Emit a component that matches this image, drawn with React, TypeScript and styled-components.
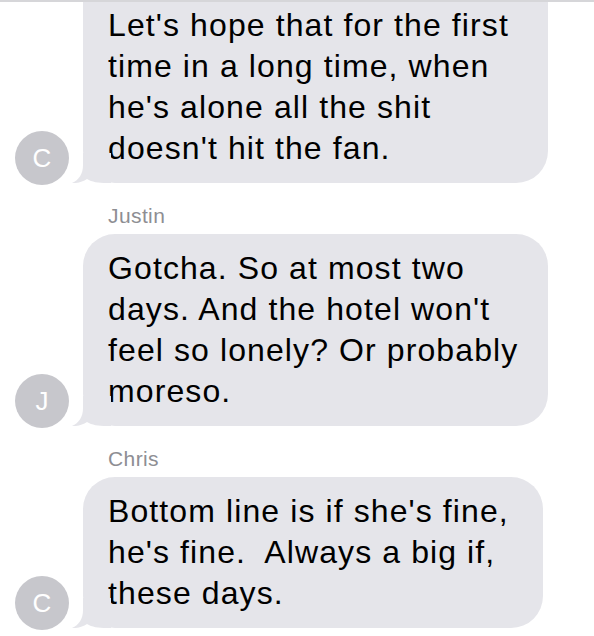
import styled, { createGlobalStyle } from "styled-components";

const GlobalStyle = createGlobalStyle`
    html, body {
        margin: 0;
        padding: 0;
        background: #ffffff;
    }
    body {
        font-family: "Liberation Sans", Arial, sans-serif;
    }
`;

const Screen = styled.div`
    width: 594px;
    height: 636px;
    overflow: hidden;
    background: #ffffff;
    border-top: 2px solid #d6d6d9;
    box-sizing: border-box;
`;

const Thread = styled.div`
    display: flex;
    flex-direction: column;
    margin-top: -52px;
`;

const Group = styled.div`
    display: flex;
    flex-direction: column;
`;

const Sender = styled.div`
    margin: 21px 0 6px 108px;
    font-size: 21px;
    line-height: 24px;
    letter-spacing: 0.4px;
    color: #8e8e93;
`;

const Row = styled.div`
    display: flex;
    align-items: flex-end;
    gap: 14px;
    padding-left: 15px;
`;

const Avatar = styled.div`
    width: 54px;
    height: 54px;
    flex-shrink: 0;
    margin-bottom: -2px;
    border-radius: 50%;
    background: #c7c7cc;
    color: #ffffff;
    font-size: 26px;
    display: flex;
    align-items: center;
    justify-content: center;
`;

const Bubble = styled.div<{ $width: number }>`
    position: relative;
    width: ${(props) => props.$width}px;
    box-sizing: border-box;
    padding: 14px 25px;
    background: #e5e5ea;
    border-radius: 32px;
    color: #000000;
    font-size: 32px;
    line-height: 41px;
    letter-spacing: 1.1px;
`;

const Line = styled.div`
    white-space: pre;
`;

const Tail = styled.svg`
    position: absolute;
    left: -12px;
    bottom: 0;
    width: 40px;
    height: 30px;
`;

interface IMessage {
    id: number;
    sender?: string;
    initial: string;
    width: number;
    lines: string[];
}

const messages: IMessage[] = [
    {
        id: 1,
        initial: "C",
        width: 465,
        lines: [
            "Only you know, I suppose.",
            "Let's hope that for the first",
            "time in a long time, when",
            "he's alone all the shit",
            "doesn't hit the fan.",
        ],
    },
    {
        id: 2,
        sender: "Justin",
        initial: "J",
        width: 465,
        lines: ["Gotcha. So at most two", "days. And the hotel won't", "feel so lonely? Or probably", "moreso."],
    },
    {
        id: 3,
        sender: "Chris",
        initial: "C",
        width: 460,
        lines: ["Bottom line is if she's fine,", "he's fine.  Always a big if,", "these days."],
    },
];

function App() {
    return (
        <Screen>
            <GlobalStyle />
            <Thread>
                {messages.map((msg) => (
                    <Group key={msg.id}>
                        {msg.sender && <Sender>{msg.sender}</Sender>}
                        <Row>
                            <Avatar>{msg.initial}</Avatar>
                            <Bubble $width={msg.width}>
                                {msg.lines.map((line, i) => (
                                    <Line key={i}>{line}</Line>
                                ))}
                                <Tail viewBox="0 0 40 30">
                                    <path
                                        d="M12,0 L12,12 C12,21 8,27 1,30 C7,30.5 12,28.5 16,26 C21,29 27,30 36,30 L40,30 L40,0 Z"
                                        fill="#e5e5ea"
                                    />
                                </Tail>
                            </Bubble>
                        </Row>
                    </Group>
                ))}
            </Thread>
        </Screen>
    );
}
export default App;
